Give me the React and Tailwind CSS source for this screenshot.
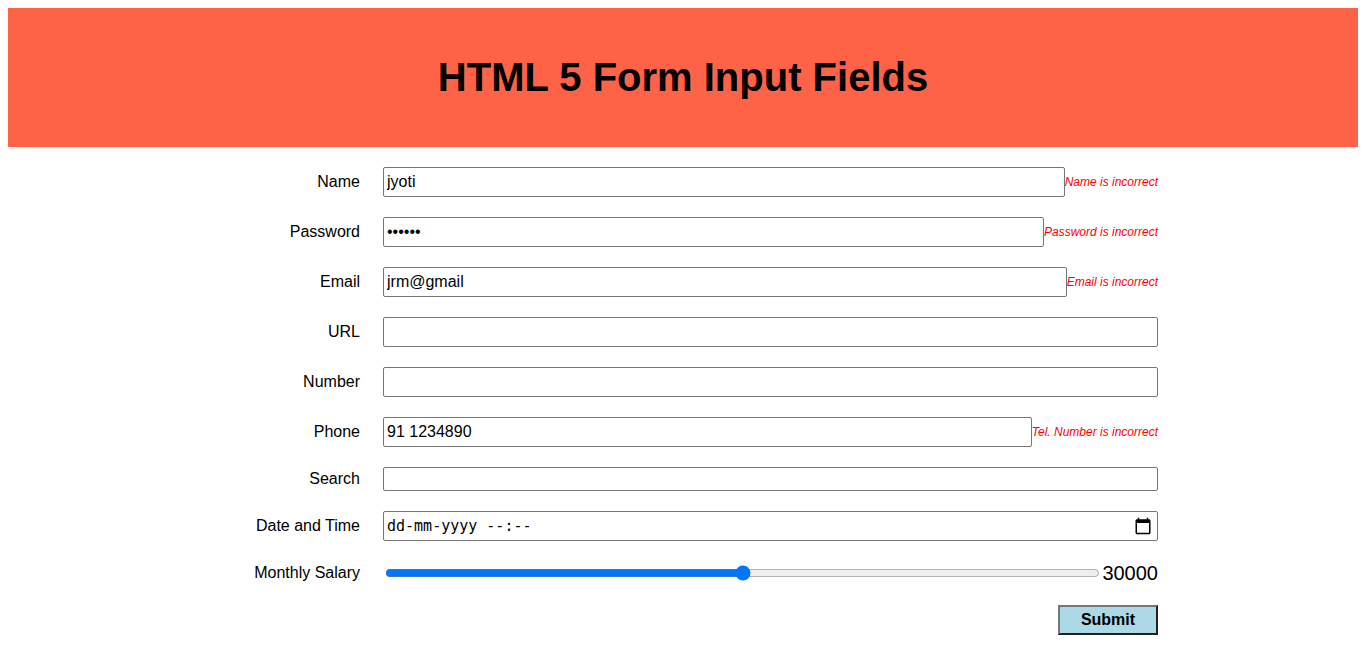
import { useState } from 'react';

const inputClass =
  'min-w-0 flex-1 rounded-[2px] border border-[#767676] bg-white px-[3px] text-base text-black placeholder:text-black';

function Row({ id, label, children }) {
  return (
    <div className="flex items-center gap-[23px]">
      <label htmlFor={id} className="w-[152px] shrink-0 text-right">
        {label}
      </label>
      <div className="flex min-w-0 flex-1 items-center">{children}</div>
    </div>
  );
}

function Field({ id, label, type, value = '', error, height = 'h-[30px]' }) {
  return (
    <Row id={id} label={label}>
      <input id={id} name={id} type={type} defaultValue={value} className={`${inputClass} ${height}`} />
      {error && <em className="text-xs text-[#ff0000]">{error}</em>}
    </Row>
  );
}

export default function App() {
  const [salary, setSalary] = useState(30000);

  return (
    <div className="bg-white p-2 font-['Liberation_Sans',Arial,sans-serif] text-base text-black">
      <header className="bg-[#ff6347] px-5 py-[47px] text-center">
        <h1 className="text-[40px] leading-[45px] font-bold">HTML 5 Form Input Fields</h1>
      </header>
      <form
        noValidate
        onSubmit={(e) => e.preventDefault()}
        className="flex flex-col gap-5 px-4 py-5 lg:px-[200px]"
      >
        <Field id="name" label="Name" type="text" value="jyoti" error="Name is incorrect" />
        <Field id="password" label="Password" type="password" value="secret" error="Password is incorrect" />
        <Field id="email" label="Email" type="email" value="jrm@gmail" error="Email is incorrect" />
        <Field id="url" label="URL" type="url" />
        <Field id="number" label="Number" type="number" />
        <Field id="phone" label="Phone" type="tel" value="91 1234890" error="Tel. Number is incorrect" />
        <Field id="search" label="Search" type="search" height="h-6" />
        <Row id="datetime" label="Date and Time">
          <div className="flex h-[30px] min-w-0 flex-1 items-center rounded-[2px] border border-[#767676] pr-[5px] pl-[3px]">
            <input
              id="datetime"
              name="datetime"
              type="text"
              placeholder="dd-mm-yyyy --:--"
              className="min-w-0 flex-1 font-['DejaVu_Sans_Mono',monospace] text-[15px] placeholder:text-black"
            />
            <button type="button" aria-label="Open calendar" className="shrink-0">
              <svg width="18" height="18" viewBox="0 0 24 24" fill="currentColor">
                <path d="M20 3h-1V1h-2v2H7V1H5v2H4c-1.1 0-2 .9-2 2v16c0 1.1.9 2 2 2h16c1.1 0 2-.9 2-2V5c0-1.1-.9-2-2-2zm0 18H4V8h16v13z" />
              </svg>
            </button>
          </div>
        </Row>
        <Row id="salary" label="Monthly Salary">
          <input
            id="salary"
            name="salary"
            type="range"
            min="10000"
            max="50000"
            step="1000"
            value={salary}
            onChange={(e) => setSalary(Number(e.target.value))}
            className="m-0.5 h-4 min-w-0 flex-1 accent-[#0075ff]"
          />
          <output htmlFor="salary" className="text-xl leading-6">
            {salary}
          </output>
        </Row>
        <button
          type="submit"
          className="h-[30px] w-[100px] self-end border-2 border-t-[#767676] border-r-[#212121] border-b-[#212121] border-l-[#767676] bg-[#add8e6] font-bold"
        >
          Submit
        </button>
      </form>
    </div>
  );
}
